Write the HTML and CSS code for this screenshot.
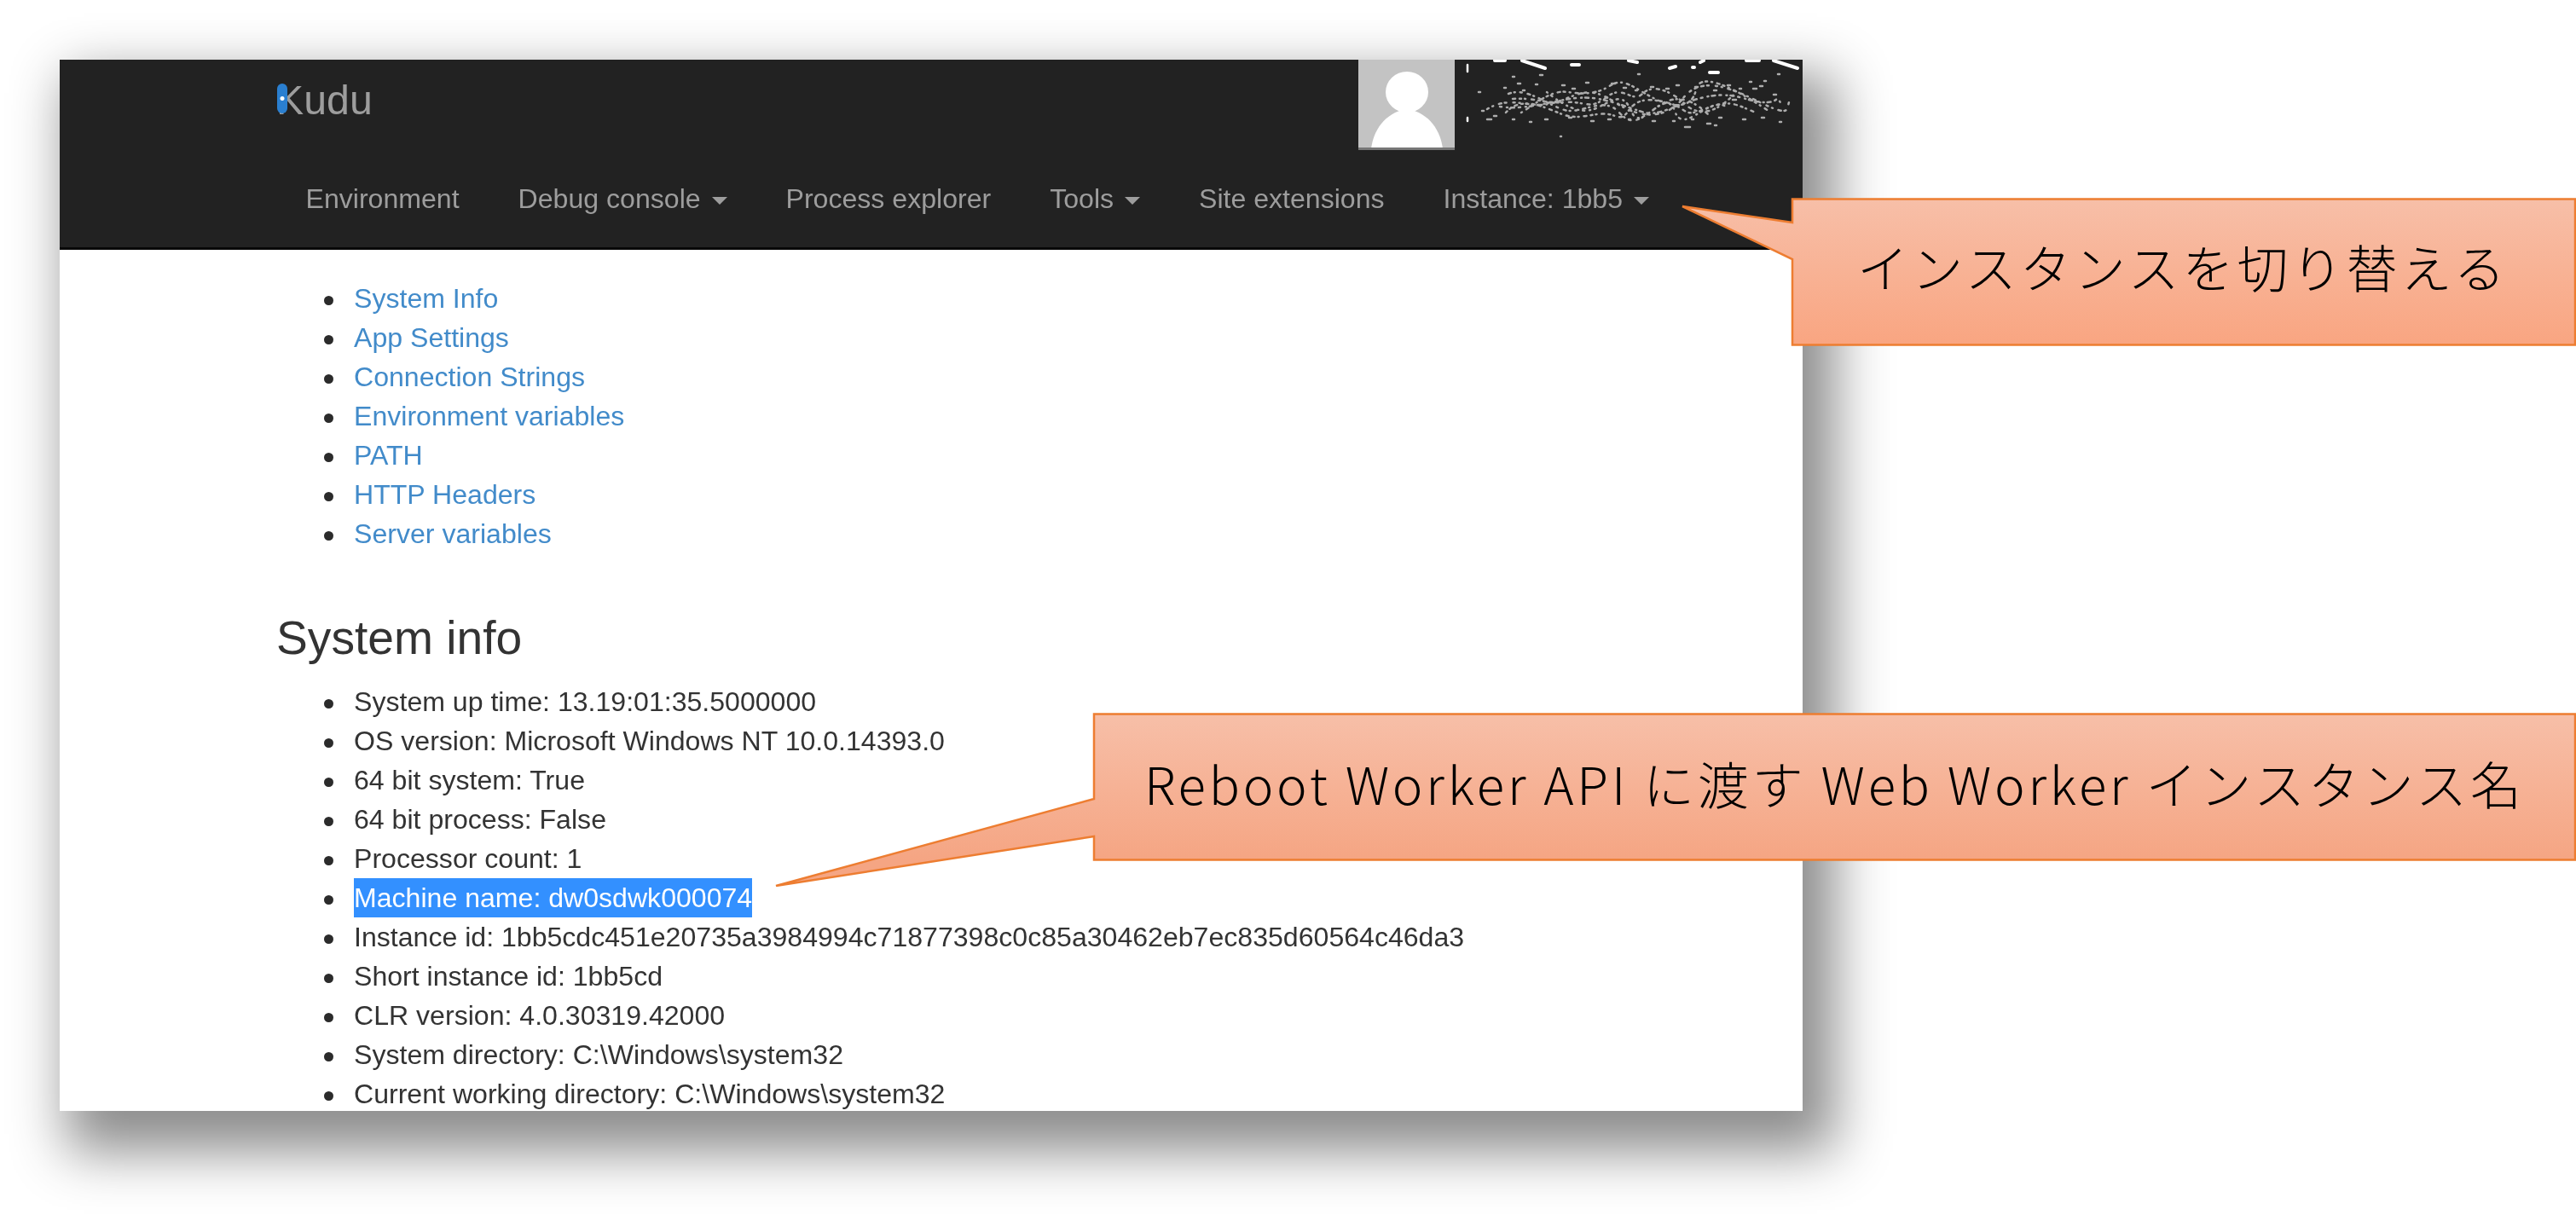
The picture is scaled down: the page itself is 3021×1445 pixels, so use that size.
FILE: index.html
```html
<!DOCTYPE html>
<html lang="ja">

<head>
    <meta charset="UTF-8">
    <title>Kudu - System info</title>
    <link rel="stylesheet" href="styles.css">
</head>

<body>
    <div class="shot">
        <div class="shot-content">
            <header class="navbar">
                <div class="navbar-top">
                    <a class="brand"><span class="brand-mark"></span>Kudu</a>
                    <div class="user">
                        <svg class="avatar" viewBox="0 0 113 106">
                            <rect width="113" height="106" fill="#c3c3c3" />
                            <ellipse cx="57" cy="38" rx="25" ry="24" fill="#fff" />
                            <path d="M15 105C17 85 30 62 57 58C84 62 97 85 99 105Z" fill="#fff" />
                            <rect y="103" width="113" height="3" fill="#777" />
                        </svg>
                        <svg class="user-name" viewBox="0 0 400 105">
                            <g class="marks">
                                <path d="M39 1H51M71 1L98 10M129 6H138M196 1L206 3M244 10L251 8M271 9H273M280 3L284 1M291 15H301M334 1H349M366 1L394 10" />
                                <path class="thin" d="M7 6V14M7 68V72" />
                            </g>
                            <g class="specks">
                                <path d="M30 58C60 40 80 60 110 50S150 30 180 50S240 70 260 45S310 30 350 50S380 55 385 48" stroke-dasharray="2 5 1 7 3 4 2 8" />
                                <path d="M55 40C80 30 110 62 130 60S170 45 185 62S210 70 230 55S270 45 290 65" stroke-dasharray="3 4 1 6 2 7" />
                                <path d="M70 62C90 50 105 35 125 38S160 40 175 30S205 35 225 45S270 60 275 35S330 40 360 60" stroke-dasharray="1 6 3 4 2 5" />
                                <path d="M45 55C75 60 105 48 135 45S190 55 215 62S280 30 330 45S365 35 375 52" stroke-dasharray="2 6 1 4 4 5" />
                                <path d="M52 62C70 42 95 55 118 64S160 58 180 66S190 42 230 48S255 70 285 58S320 52 345 62" stroke-dasharray="2 4 1 6 3 5" />
                                <path d="M60 46C85 44 100 52 122 50S150 60 170 44S200 52 212 40S245 36 262 52S300 62 322 38" stroke-dasharray="3 5 2 4 1 7" />
                                <path d="M100 38C120 54 140 66 160 56S190 38 200 62S240 30 250 60S290 42 310 55" stroke-dasharray="1 5 2 6" />
                                <path d="M60 20H62M92 18H95M87 29H89M20 38H22M30 70H35M80 73H82M116 90H117M207 17H209M262 79H268M288 75H292M297 77H299M355 25H357M371 17H373M338 26H340M373 73H375M318 47H322M342 34H346" />
                                <path d="M50 33H52M66 28H69M72 36H74M118 30H121M130 34H133M146 27H149M176 28H180M190 33H193M204 36H206M222 32H225M240 34H243M252 30H255M274 32H277M296 36H299M312 30H315M326 34H328M350 31H353M366 41H369M24 60H26M38 66H41M60 70H62M98 70H101M126 68H129M152 72H155M172 70H175M196 70H198M224 72H227M248 72H250M270 70H272M302 68H305M330 70H333M352 68H355" />
                            </g>
                        </svg>
                    </div>
                </div>
                <nav class="navbar-nav">
                    <a>Environment</a>
                    <a>Debug console <b class="caret"></b></a>
                    <a>Process explorer</a>
                    <a>Tools <b class="caret"></b></a>
                    <a>Site extensions</a>
                    <a>Instance: 1bb5 <b class="caret"></b></a>
                </nav>
            </header>

            <main class="container">
                <ul class="link-list">
                    <li><a>System Info</a></li>
                    <li><a>App Settings</a></li>
                    <li><a>Connection Strings</a></li>
                    <li><a>Environment variables</a></li>
                    <li><a>PATH</a></li>
                    <li><a>HTTP Headers</a></li>
                    <li><a>Server variables</a></li>
                </ul>

                <h3>System info</h3>
                <ul>
                    <li>System up time: 13.19:01:35.5000000</li>
                    <li>OS version: Microsoft Windows NT 10.0.14393.0</li>
                    <li>64 bit system: True</li>
                    <li>64 bit process: False</li>
                    <li>Processor count: 1</li>
                    <li><span class="selected">Machine name: dw0sdwk000074</span></li>
                    <li>Instance id: 1bb5cdc451e20735a3984994c71877398c0c85a30462eb7ec835d60564c46da3</li>
                    <li>Short instance id: 1bb5cd</li>
                    <li>CLR version: 4.0.30319.42000</li>
                    <li>System directory: C:\Windows\system32</li>
                    <li>Current working directory: C:\Windows\system32</li>
                </ul>
            </main>
        </div>
    </div>

    <div class="callout callout-instance">
        <svg class="callout-shape" viewBox="0 0 1050 174">
            <defs>
                <linearGradient id="fill-instance" x1="0" y1="0" x2="0" y2="1">
                    <stop offset="0" stop-color="#f7bfa8" />
                    <stop offset="1" stop-color="#f9a581" />
                </linearGradient>
            </defs>
            <path d="M131 1.5H1049V172.5H131V72L2 10L131 29Z" fill="url(#fill-instance)" stroke="#ed7d31" stroke-width="2.5" />
        </svg>
        <p class="callout-text">インスタンスを切り替える</p>
    </div>

    <div class="callout callout-machine">
        <svg class="callout-shape" viewBox="0 0 2113 204">
            <defs>
                <linearGradient id="fill-machine" x1="0" y1="0" x2="0" y2="1">
                    <stop offset="0" stop-color="#f7bfa8" />
                    <stop offset="0.85" stop-color="#f5a583" />
                    <stop offset="1" stop-color="#f5a583" />
                </linearGradient>
            </defs>
            <path d="M375 1.5H2112V172.5H375V145L2 203L375 101Z" fill="url(#fill-machine)" stroke="#ed7d31" stroke-width="2.5" />
        </svg>
        <p class="callout-text">Reboot Worker API に渡す Web Worker インスタンス名</p>
    </div>
</body>

</html>
```

FILE: styles.css
```css
* {
    box-sizing: border-box;
}

html,
body {
    margin: 0;
    height: 1445px;
    overflow: hidden;
    background-color: #ffffff;
}

/* The pasted screenshot with its slide shadow */
.shot {
    width: 2044px;
    height: 1233px;
    margin: 70px 0 0 70px;
    overflow: hidden;
    background-color: #ffffff;
    box-shadow: 23px 33px 60px 15px rgba(0, 0, 0, 0.45);
    font-family: "Liberation Sans", Arial, sans-serif;
    font-size: 32.1px;
    line-height: 46px;
    color: #333333;
}

/* The screenshot was scaled up, so the text is slightly soft */
.shot-content {
    filter: blur(0.7px);
}

/* Navbar */
.navbar {
    background-color: #222222;
    border-bottom: 3px solid #080808;
}

.navbar-top {
    display: flex;
    justify-content: space-between;
    height: 105px;
    padding-left: 254px;
}

.brand {
    position: relative;
    align-self: flex-start;
    margin-top: 24px;
    font-size: 48.3px;
    color: #9d9d9d;
}

.brand-mark {
    position: absolute;
    left: 1px;
    top: 4px;
    width: 12px;
    height: 35px;
    border-radius: 6px;
    background: radial-gradient(circle at 50% 50%, #ffffff 0, #ffffff 2px, #2a7fd0 3px);
}

.user {
    display: flex;
    gap: 8px;
}

.avatar {
    width: 113px;
    height: 106px;
}

.user-name {
    width: 400px;
    height: 105px;
}

.marks path {
    fill: none;
    stroke: #ffffff;
    stroke-width: 4;
    stroke-linecap: round;
}

.marks .thin {
    stroke-width: 2.5;
}

.specks path {
    fill: none;
    stroke: #adadad;
    stroke-width: 2.5;
    stroke-linecap: round;
}

.navbar-nav {
    display: flex;
    height: 115px;
    align-items: center;
    padding-left: 254px;
}

.navbar-nav a {
    padding: 0 34.5px;
    color: #9d9d9d;
    white-space: nowrap;
}

.caret {
    display: inline-block;
    width: 0;
    height: 0;
    margin-left: 4px;
    vertical-align: middle;
    border-top: 9px solid #9d9d9d;
    border-left: 9px solid transparent;
    border-right: 9px solid transparent;
}

/* Page body */
.container {
    padding: 34px 0 0 254px;
}

.container ul {
    margin: 0 0 23px;
    padding-left: 91px;
    list-style: none;
}

/* Bullets sit further from the text than the default marker */
.container li::before {
    content: "";
    display: inline-block;
    width: 11px;
    height: 11px;
    margin: 0 24px 0 -35px;
    border-radius: 50%;
    background-color: #2b2b2b;
    vertical-align: middle;
}

.link-list a {
    color: #428bca;
}

h3 {
    margin: 69px 0 21px;
    font-size: 55.2px;
    font-weight: 400;
    line-height: 60.7px;
}

.selected {
    display: inline-block;
    background-color: #3390ff;
    color: #ffffff;
}

/* PowerPoint callouts laid over the screenshot */
.callout {
    position: absolute;
    font-family: "Noto Sans CJK JP", sans-serif;
    font-weight: 300;
    color: #000000;
}

.callout-shape {
    position: absolute;
    left: 0;
    top: 0;
    width: 100%;
    height: 100%;
}

.callout-text {
    position: relative;
    margin: 0;
    font-size: 60px;
    line-height: 80px;
    white-space: nowrap;
}

.callout-instance {
    left: 1971px;
    top: 232px;
    width: 1050px;
    height: 174px;
}

.callout-instance .callout-text {
    padding: 40px 0 0 207px;
    letter-spacing: 4px;
}

.callout-machine {
    left: 908px;
    top: 836px;
    width: 2113px;
    height: 204px;
}

.callout-machine .callout-text {
    padding: 42px 0 0 434px;
    letter-spacing: 3.8px;
}
```
